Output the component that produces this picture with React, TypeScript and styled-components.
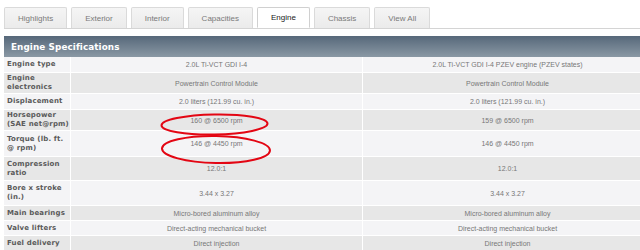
import React, { FC } from 'react';
import styled, { createGlobalStyle } from 'styled-components';

const GlobalStyle = createGlobalStyle`
    html, body {
        margin: 0;
        padding: 0;
        background: #ffffff;
        overflow: hidden;
    }
`;

const Page = styled.div`
    width: 660px;
    padding: 7px 0 0 4px;
    font-family: 'Liberation Sans', Arial, sans-serif;
`;

const TabBar = styled.div`
    display: flex;
    gap: 4px;
    border-bottom: 1px solid #d4d4d4;
    height: 21px;
`;

const Tab = styled.div<{ $active?: boolean }>`
    display: flex;
    align-items: center;
    padding: 0 13px;
    height: 21px;
    box-sizing: border-box;
    border: 1px solid ${(p) => (p.$active ? '#d0d0d0' : '#dadada')};
    border-bottom: ${(p) => (p.$active ? '1px solid #ffffff' : 'none')};
    border-radius: 2px 2px 0 0;
    background: ${(p) => (p.$active ? '#ffffff' : 'linear-gradient(#f5f5f5, #ebebeb)')};
    color: ${(p) => (p.$active ? '#222' : '#7a7a7a')};
    font-size: 8px;
    margin-bottom: ${(p) => (p.$active ? '-1px' : '0')};
`;

const Table = styled.div`
    position: relative;
    margin-top: 7px;
    width: 648px;
`;

const Header = styled.div`
    height: 21px;
    display: flex;
    align-items: center;
    padding-left: 7px;
    background: linear-gradient(#56687a, #8a98a4);
    color: #ffffff;
    font-family: 'DejaVu Sans', Verdana, sans-serif;
    font-weight: bold;
    font-size: 8.8px;
    letter-spacing: 0.1px;
`;

const Row = styled.div<{ $h: number; $alt: boolean }>`
    display: grid;
    grid-template-columns: 66px 292px 290px;
    height: ${(p) => p.$h}px;
    box-sizing: border-box;
    border-bottom: 1px solid #ffffff;
    background: ${(p) => (p.$alt ? '#e7e7e7' : '#f4f4f6')};
`;

const Label = styled.div`
    display: flex;
    align-items: center;
    padding-left: 3px;
    font-family: 'DejaVu Sans', Verdana, sans-serif;
    font-weight: bold;
    font-size: 7px;
    line-height: 9px;
    color: #5a5a5a;
    letter-spacing: 0.15px;
`;

const Value = styled.div`
    display: flex;
    align-items: center;
    justify-content: center;
    border-left: 1px solid #ffffff;
    font-size: 7px;
    color: #777777;
`;

const Marks = styled.svg`
    position: absolute;
    left: -4px;
    top: -35px;
    pointer-events: none;
`;

const tabs = ['Highlights', 'Exterior', 'Interior', 'Capacities', 'Engine', 'Chassis', 'View All'];

const rows: [React.ReactNode, string, string, number][] = [
    ['Engine type', '2.0L Ti-VCT GDI I-4', '2.0L Ti-VCT GDI I-4 PZEV engine (PZEV states)', 16],
    [<>Engine<br />electronics</>, 'Powertrain Control Module', 'Powertrain Control Module', 21],
    ['Displacement', '2.0 liters (121.99 cu. in.)', '2.0 liters (121.99 cu. in.)', 16],
    [<>Horsepower<br />(SAE net@rpm)</>, '160 @ 6500 rpm', '159 @ 6500 rpm', 21],
    [<>Torque (lb. ft.<br />@ rpm)</>, '146 @ 4450 rpm', '146 @ 4450 rpm', 26],
    [<>Compression<br />ratio</>, '12.0:1', '12.0:1', 24],
    [<>Bore x stroke<br />(in.)</>, '3.44 x 3.27', '3.44 x 3.27', 25],
    ['Main bearings', 'Micro-bored aluminum alloy', 'Micro-bored aluminum alloy', 15],
    ['Valve lifters', 'Direct-acting mechanical bucket', 'Direct-acting mechanical bucket', 15],
    ['Fuel delivery', 'Direct injection', 'Direct injection', 15],
];

const App: FC = () => (
    <Page>
        <GlobalStyle />
        <TabBar>
            {tabs.map((t) => (
                <Tab key={t} $active={t === 'Engine'}>
                    {t}
                </Tab>
            ))}
        </TabBar>
        <Table>
            <Header>Engine Specifications</Header>
            {rows.map(([label, a, b, h], i) => (
                <Row key={i} $h={h} $alt={i % 2 === 1}>
                    <Label>{label}</Label>
                    <Value>{a}</Value>
                    <Value>{b}</Value>
                </Row>
            ))}
            <Marks width="640" height="250" viewBox="0 0 640 250">
                <ellipse cx="214.5" cy="123.5" rx="53" ry="10" fill="none" stroke="#e30613" strokeWidth="2" transform="rotate(-1 214 123)" />
                <ellipse cx="216" cy="148.5" rx="54" ry="13.5" fill="none" stroke="#e30613" strokeWidth="2" transform="rotate(1 216 148)" />
            </Marks>
        </Table>
    </Page>
);

export default App;
